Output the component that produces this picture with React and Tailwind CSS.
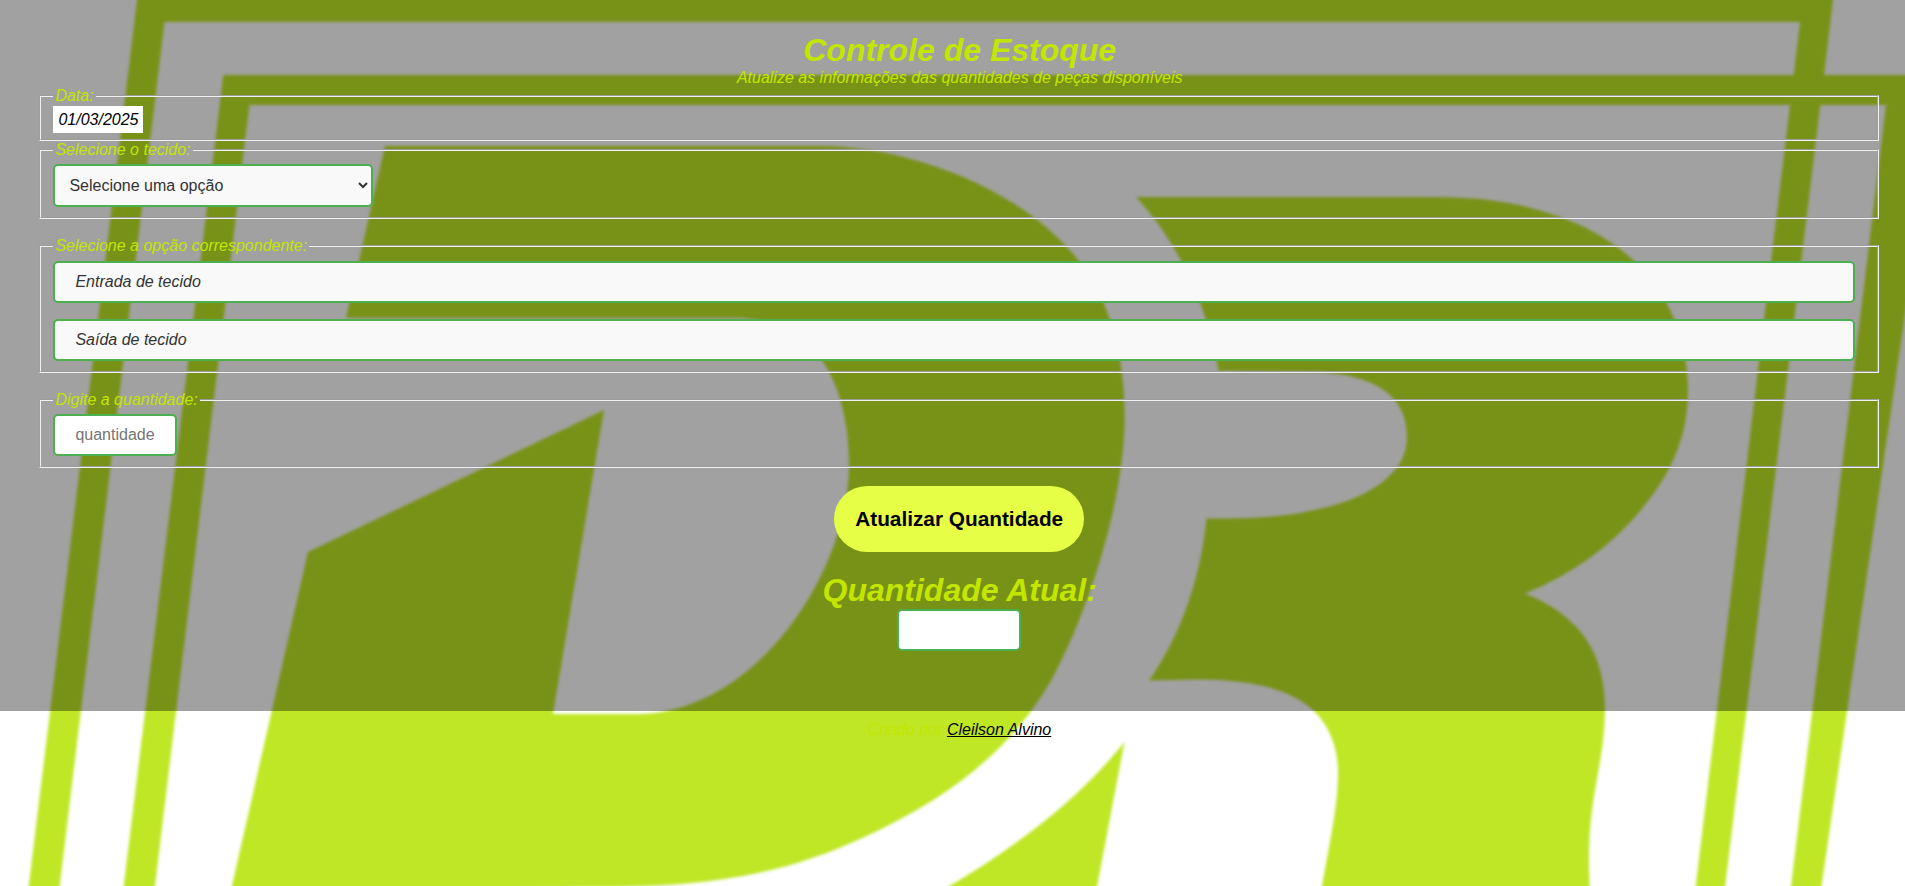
import React from "react";

const LETTER_D = `M385,146 L820,146
  C905,146 1020,186 1079,261
  C1110,300 1124.7,357 1124.7,416
  C1124.7,500 1089,610 1052,679
  C1010,752 947,799 864.5,837
  C790,872 715,887 600,887
  L500,889 L230.5,892 L308,552 L604,410 L553,714 L640,714
  C758,711 849,570 849,465
  C849,385 817,318 735,318
  L346,318 Z`;

const LETTER_R = `M1136,197 L1420,197
  C1480,196 1520,202 1563,218
  C1592,229 1615,243 1634,261
  C1669,293 1688,340 1688,391
  C1688,432 1674,468 1648.7,500
  C1618,541 1576,573 1525,593.5
  C1583,617 1605,656 1605,709
  C1605,735 1601,757 1597,779
  C1591,812 1587,842 1590,892
  L1321,892
  C1331,835 1338,805 1338,772
  C1338,748 1330,727 1314,711
  C1292,690 1255,680 1200,679.5
  L1149,680.5
  C1182,634 1201,575 1206.5,518.5
  C1250,519 1285,517 1314,510
  C1370,499 1407,473 1407,437
  C1407,400 1381,372 1305,372
  L1218.5,371
  C1207,306 1181,246 1136,197 Z`;

const SPIKE = "M1124.5,742 C1075,804 1010,851 939,892 L1096,892 Z";

function Backdrop() {
  return (
    <svg className="pointer-events-none absolute inset-0 -z-10 h-[886px] w-[1905px]" viewBox="0 0 1905 886" fill="#bfe726" aria-hidden="true">
      <defs>
        <filter id="soft" x="-20" y="-20" width="1945" height="926" filterUnits="userSpaceOnUse" colorInterpolationFilters="sRGB">
          <feGaussianBlur stdDeviation="1.6" />
        </filter>
      </defs>
      <g filter="url(#soft)">
        <path fillRule="evenodd" d="M139.5,-20 L1835.5,-20 L1723.5,900 L1694,900 L1800,22 L164.5,22 L58,900 L27,900 Z" />
        <path d="M223.3,75 L1940,75 L1819.5,900 L1789.3,900 L1886,105 L249.4,105 L153.3,900 L122,900 Z" />
        <path d={LETTER_D} />
        <path d={LETTER_R} />
        <path d={SPIKE} />
      </g>
    </svg>
  );
}

function Group({ label, className = "", children }) {
  return (
    <fieldset className={`border-2 border-[#f0f0f0] px-3 pb-[10px] [border-style:groove] ${className}`}>
      <legend className="px-[2px] text-[#c3e600]">{label}</legend>
      {children}
    </fieldset>
  );
}

function Option({ children }) {
  return (
    <div className="mr-[10px] h-[42px] rounded-[5px] border-2 border-[#4caf50] bg-[#f9f9f9] px-5 py-[10px] text-[#333]">{children}</div>
  );
}

export default function App() {
  return (
    <div className="relative isolate h-[886px] w-full overflow-hidden bg-white font-['Liberation_Sans',Arial,sans-serif] text-base leading-[18px] italic">
      <Backdrop />
      <main className="h-[711px] bg-[rgba(0,0,0,0.37)] pt-8 pr-[26px] pl-[39.4px]">
        <header className="pl-px text-center text-[#c3e600]">
          <h1 className="text-[32px] leading-[37px] font-bold">Controle de Estoque</h1>
          <p>Atualize as informações das quantidades de peças disponíveis</p>
        </header>
        <form>
          <Group label="Data:" className="h-[54px] pt-[6px]">
            <span className="bg-white p-[5px] text-black">01/03/2025</span>
          </Group>
          <Group label="Selecione o tecido:" className="h-[78px] pt-[5px]">
            <select className="block h-[43px] w-[320px] rounded-[5px] border-2 border-[#4caf50] bg-[#f9f9f9] p-[10px] text-base text-[#333] not-italic">
              <option>Selecione uma opção</option>
            </select>
          </Group>
          <Group label="Selecione a opção correspondente:" className="mt-[18px] h-[136px] pt-[6px]">
            <div className="flex flex-col gap-4">
              <Option>Entrada de tecido</Option>
              <Option>Saída de tecido</Option>
            </div>
          </Group>
          <Group label="Digite a quantidade:" className="mt-[18px] h-[77px] pt-[5px]">
            <input placeholder="quantidade" className="block h-[42px] w-[124px] rounded-[5px] border-2 border-[#4caf50] bg-white px-5 py-[10px] not-italic placeholder:text-[#757575]" />
          </Group>
          <button type="button" className="mx-auto mt-[18px] block h-[66px] w-[250px] rounded-full bg-[#e6ff46] text-[20.8px] font-bold text-black not-italic">
            Atualizar Quantidade
          </button>
        </form>
        <h2 className="mt-5 pl-px text-center text-[32px] leading-[37px] font-bold text-[#c3e600]">Quantidade Atual:</h2>
        <input readOnly className="mx-auto block h-[42px] w-[124px] rounded-[5px] border-2 border-[#4caf50] bg-white" />
      </main>
      <footer className="pt-[10px] pr-[26px] pl-10 text-center text-[#c3e600]">
        Criado por <a className="text-black underline">Cleilson Alvino</a>
      </footer>
    </div>
  );
}
